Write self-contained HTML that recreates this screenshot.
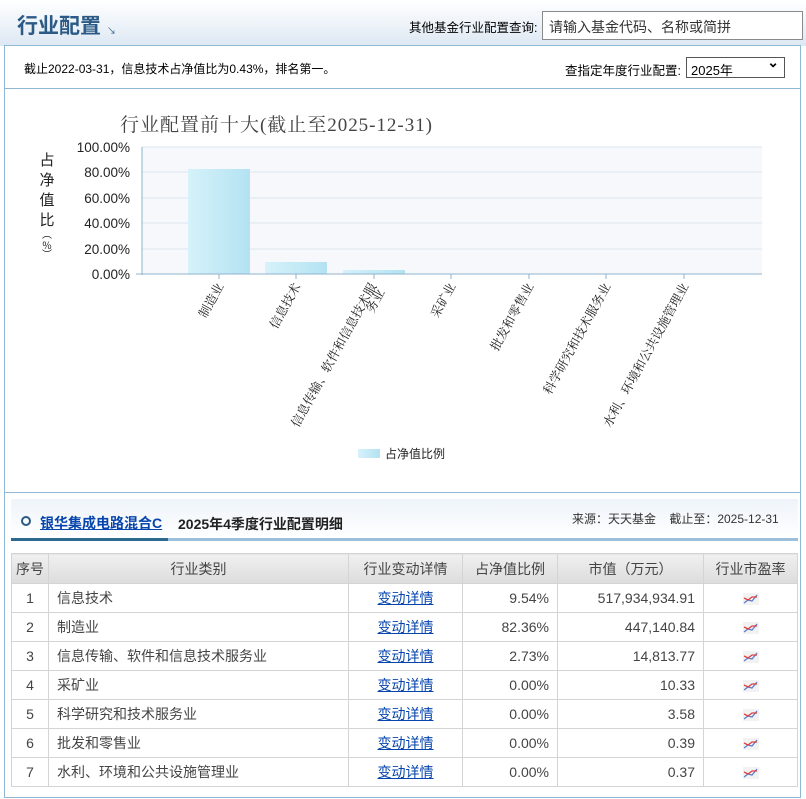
<!DOCTYPE html>
<html><head><meta charset="utf-8"><style>
*{margin:0;padding:0;box-sizing:border-box}
body{width:806px;height:799px;background:#fff;font-family:"Liberation Sans","Noto Sans CJK SC",sans-serif;font-size:13px;color:#333;position:relative;overflow:hidden}
.hdr{position:absolute;left:0;top:0;width:806px;height:46px;background:linear-gradient(#fff,#dde8f3);}
.hdr h1{position:absolute;left:17px;top:10px;font-size:21px;color:#2b5a86;font-weight:bold}
.hdr .ar{position:absolute;left:107px;top:24px;font-size:9px;color:#2b5a86}
.q{position:absolute;left:409px;top:17px;font-size:12.5px;color:#000}
.inp{position:absolute;left:542px;top:11px;width:261px;height:29px;border:1px solid #8a8a8a;background:#fff;font-size:14px;padding:5px 6px;color:#333}
.box{position:absolute;left:4px;top:45px;width:797px;height:753px;border:1px solid #8fb8d4}
.l1{position:absolute;left:24px;top:60px;font-size:12px;color:#000}
.l2{position:absolute;left:565px;top:60px;font-size:12.5px;color:#000}
.sel{position:absolute;left:686px;top:57px;width:99px;height:21px;border:1px solid #555;font-size:13px;padding:2px 4px;color:#000;background:#fff}
.sel:after{content:"⌄";position:absolute;right:5px;top:-4px;font-size:14px;font-weight:bold}
.sep{position:absolute;left:5px;width:796px;height:1px;background:#8fb8d4}
.t2{position:absolute;left:11px;top:499px;width:787px;height:42px;background:linear-gradient(#eef4fa,#fff);border-bottom:3px solid #9cc0dc}
.t2 .dk{position:absolute;left:0;bottom:-3px;width:157px;height:3px;background:#2b6a8e}
.t2 .o{position:absolute;left:10px;top:17px;width:10px;height:10px;border:2px solid #2b5a86;border-radius:50%}
.t2 .n{position:absolute;left:29px;top:14px;font-size:14px;font-weight:bold;color:#0645ad;text-decoration:underline}
.t2 .d{position:absolute;left:167px;top:15px;font-size:14px;font-weight:bold;color:#222}
.t2 .s{position:absolute;left:561px;top:11px;font-size:12px;color:#333}
table{position:absolute;left:11px;top:553px;width:787px;border-collapse:collapse;font-size:14px;color:#444}
td,th{border:1px solid #d4d4d4;height:29px;padding:0 8px}
th{background:linear-gradient(#f0f0f0,#dcdcdc);font-weight:normal;height:30px;color:#444}
td.c{text-align:center}td.r{text-align:right}
a{color:#0645ad;text-decoration:underline}
td svg{vertical-align:middle}
</style></head><body>
<div class="hdr"><h1>行业配置</h1><span class="ar">↘</span><span class="q">其他基金行业配置查询:</span><div class="inp">请输入基金代码、名称或简拼</div></div>
<div class="box"></div>
<div class="l1">截止2022-03-31，信息技术占净值比为0.43%，排名第一。</div>
<div class="l2">查指定年度行业配置:</div><div class="sel">2025年</div>
<div class="sep" style="top:88px"></div>
<div class="sep" style="top:492px"></div>
<svg style="position:absolute;left:0;top:0" width="806" height="490" font-family="Liberation Serif,Noto Serif CJK SC,serif">
<text x="120" y="131" font-size="19" fill="#444" font-family="Liberation Serif,Noto Serif CJK SC,serif" textLength="312">行业配置前十大(截止至2025-12-31)</text>
<rect x="142" y="147" width="620" height="127" fill="#f6f8fb"/>
<g stroke="#dde6ef"><line x1="142" y1="172" x2="762" y2="172"/><line x1="142" y1="198" x2="762" y2="198"/><line x1="142" y1="223" x2="762" y2="223"/><line x1="142" y1="249" x2="762" y2="249"/><line x1="142" y1="147" x2="762" y2="147"/></g>
<defs><linearGradient id="g"><stop offset="0" stop-color="#d6f2fa"/><stop offset="1" stop-color="#b3e2f2"/></linearGradient></defs>
<rect x="188" y="169" width="62" height="105" fill="url(#g)"/>
<rect x="265" y="262" width="62" height="12" fill="url(#g)"/>
<rect x="343" y="270" width="62" height="4" fill="url(#g)"/>
<line x1="142" y1="147" x2="142" y2="275" stroke="#8fb3cc"/>
<line x1="136" y1="274" x2="762" y2="274" stroke="#8fb3cc"/>
<g font-family="Liberation Sans,sans-serif" font-size="13.5" fill="#222" text-anchor="end">
<text x="130" y="152">100.00%</text><text x="130" y="177">80.00%</text><text x="130" y="203">60.00%</text><text x="130" y="228">40.00%</text><text x="130" y="254">20.00%</text><text x="130" y="279">0.00%</text></g>
<g font-size="15" fill="#222" font-family="Noto Sans CJK SC,sans-serif" text-anchor="middle"><text x="47" y="165">占</text><text x="47" y="185">净</text><text x="47" y="205">值</text><text x="47" y="225">比</text><text x="47" y="238" font-size="10">︵</text><text x="47" y="249" font-size="10">%</text><text x="47" y="258" font-size="10">︶</text></g>
<g stroke="#8fb3cc"><line x1="219" y1="274" x2="219" y2="279"/><line x1="296" y1="274" x2="296" y2="279"/><line x1="374" y1="274" x2="374" y2="279"/><line x1="451" y1="274" x2="451" y2="279"/><line x1="529" y1="274" x2="529" y2="279"/><line x1="606" y1="274" x2="606" y2="279"/><line x1="684" y1="274" x2="684" y2="279"/></g>
<g font-size="12.5" fill="#222" text-anchor="end">
<text transform="translate(224,286) rotate(-61)">制造业</text>
<text transform="translate(301,286) rotate(-61)">信息技术</text>
<text transform="translate(377,286) rotate(-61)">信息传输、软件和信息技术服</text>
<text transform="translate(385,292) rotate(-61)">务业</text>
<text transform="translate(456,286) rotate(-61)">采矿业</text>
<text transform="translate(534,286) rotate(-61)">批发和零售业</text>
<text transform="translate(611,286) rotate(-61)">科学研究和技术服务业</text>
<text transform="translate(689,286) rotate(-61)">水利、环境和公共设施管理业</text></g>
<rect x="358" y="449" width="22" height="9" fill="url(#g)"/>
<text x="385" y="458" font-size="12" fill="#222" font-family="Liberation Sans,Noto Sans CJK SC,sans-serif">占净值比例</text>
</svg>
<div class="t2"><div class="dk"></div><div class="o"></div><span class="n">银华集成电路混合C</span><span class="d">2025年4季度行业配置明细</span><span class="s">来源：天天基金&nbsp;&nbsp;&nbsp;&nbsp;截止至：2025-12-31</span></div>
<table>
<tr><th style="width:37px;padding:0">序号</th><th style="width:300px">行业类别</th><th style="width:114px">行业变动详情</th><th style="width:95px">占净值比例</th><th style="width:146px">市值（万元）</th><th>行业市盈率</th></tr>
<tr><td class="c">1</td><td>信息技术</td><td class="c"><a>变动详情</a></td><td class="r">9.54%</td><td class="r">517,934,934.91</td><td class="c"><svg width="16" height="12"><rect width="16" height="12" fill="#f2f2f2"/><polyline points="1,10 5,7 9,8 14,2" fill="none" stroke="#5a7fd0" stroke-width="1.3"/><polyline points="1,5 5,7 9,4 14,4" fill="none" stroke="#e04040" stroke-width="1.3"/></svg></td></tr>
<tr><td class="c">2</td><td>制造业</td><td class="c"><a>变动详情</a></td><td class="r">82.36%</td><td class="r">447,140.84</td><td class="c"><svg width="16" height="12"><rect width="16" height="12" fill="#f2f2f2"/><polyline points="1,10 5,7 9,8 14,2" fill="none" stroke="#5a7fd0" stroke-width="1.3"/><polyline points="1,5 5,7 9,4 14,4" fill="none" stroke="#e04040" stroke-width="1.3"/></svg></td></tr>
<tr><td class="c">3</td><td>信息传输、软件和信息技术服务业</td><td class="c"><a>变动详情</a></td><td class="r">2.73%</td><td class="r">14,813.77</td><td class="c"><svg width="16" height="12"><rect width="16" height="12" fill="#f2f2f2"/><polyline points="1,10 5,7 9,8 14,2" fill="none" stroke="#5a7fd0" stroke-width="1.3"/><polyline points="1,5 5,7 9,4 14,4" fill="none" stroke="#e04040" stroke-width="1.3"/></svg></td></tr>
<tr><td class="c">4</td><td>采矿业</td><td class="c"><a>变动详情</a></td><td class="r">0.00%</td><td class="r">10.33</td><td class="c"><svg width="16" height="12"><rect width="16" height="12" fill="#f2f2f2"/><polyline points="1,10 5,7 9,8 14,2" fill="none" stroke="#5a7fd0" stroke-width="1.3"/><polyline points="1,5 5,7 9,4 14,4" fill="none" stroke="#e04040" stroke-width="1.3"/></svg></td></tr>
<tr><td class="c">5</td><td>科学研究和技术服务业</td><td class="c"><a>变动详情</a></td><td class="r">0.00%</td><td class="r">3.58</td><td class="c"><svg width="16" height="12"><rect width="16" height="12" fill="#f2f2f2"/><polyline points="1,10 5,7 9,8 14,2" fill="none" stroke="#5a7fd0" stroke-width="1.3"/><polyline points="1,5 5,7 9,4 14,4" fill="none" stroke="#e04040" stroke-width="1.3"/></svg></td></tr>
<tr><td class="c">6</td><td>批发和零售业</td><td class="c"><a>变动详情</a></td><td class="r">0.00%</td><td class="r">0.39</td><td class="c"><svg width="16" height="12"><rect width="16" height="12" fill="#f2f2f2"/><polyline points="1,10 5,7 9,8 14,2" fill="none" stroke="#5a7fd0" stroke-width="1.3"/><polyline points="1,5 5,7 9,4 14,4" fill="none" stroke="#e04040" stroke-width="1.3"/></svg></td></tr>
<tr><td class="c">7</td><td>水利、环境和公共设施管理业</td><td class="c"><a>变动详情</a></td><td class="r">0.00%</td><td class="r">0.37</td><td class="c"><svg width="16" height="12"><rect width="16" height="12" fill="#f2f2f2"/><polyline points="1,10 5,7 9,8 14,2" fill="none" stroke="#5a7fd0" stroke-width="1.3"/><polyline points="1,5 5,7 9,4 14,4" fill="none" stroke="#e04040" stroke-width="1.3"/></svg></td></tr>
</table>
</body></html>
